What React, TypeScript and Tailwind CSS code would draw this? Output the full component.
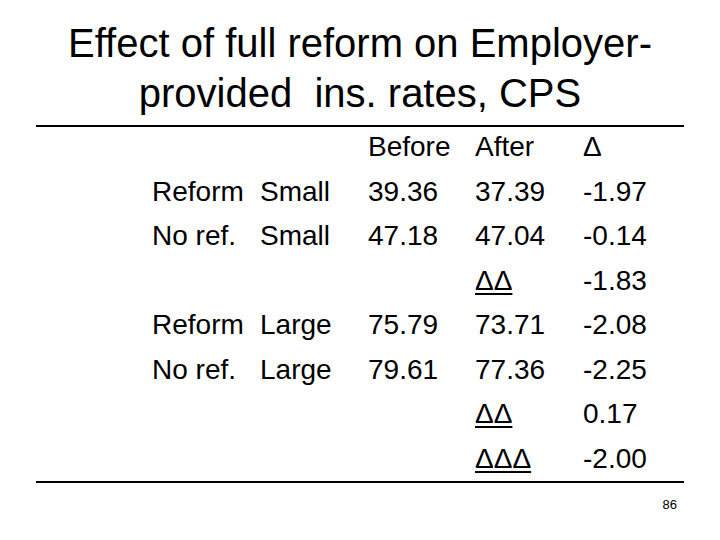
import React from 'react';

const rows: string[][] = [
  ['', '', 'Before', 'After', 'Δ'],
  ['Reform', 'Small', '39.36', '37.39', '-1.97'],
  ['No ref.', 'Small', '47.18', '47.04', '-0.14'],
  ['', '', '', 'ΔΔ', '-1.83'],
  ['Reform', 'Large', '75.79', '73.71', '-2.08'],
  ['No ref.', 'Large', '79.61', '77.36', '-2.25'],
  ['', '', '', 'ΔΔ', '0.17'],
  ['', '', '', 'ΔΔΔ', '-2.00'],
];

const App = () => {
  return (
    <div className="w-[720px] h-[540px] bg-white text-black font-['Liberation_Sans',Arial,sans-serif] overflow-hidden">
      {/* Title */}
      <div className="pt-[18px] text-center text-[40px] leading-[50px]">
        <div>Effect of full reform on Employer-</div>
        <div className="whitespace-pre">provided  ins. rates, CPS</div>
      </div>

      <div className="mt-[7px] ml-[36px] w-[648px] h-[2px] bg-black" />

      {/* Table */}
      <div className="-mt-0.5 pl-[152px] text-[28px] leading-[44.5px]">
        {rows.map((row, i) => (
          <div key={i} className="grid grid-cols-[108px_108px_107px_108px_1fr] h-[44.5px]">
            {row.map((cell, j) => (
              <div
                key={j}
                className={`whitespace-nowrap ${
                  cell.startsWith('ΔΔ') ? 'underline decoration-[2px] underline-offset-[3px]' : ''
                }`}
              >
                {cell}
              </div>
            ))}
          </div>
        ))}
      </div>

      <div className="ml-[36px] w-[648px] h-[2px] bg-black" />

      <div className="mt-[14px] pr-[43px] text-right text-[13px] leading-[15px]">86</div>
    </div>
  );
};

export default App;
